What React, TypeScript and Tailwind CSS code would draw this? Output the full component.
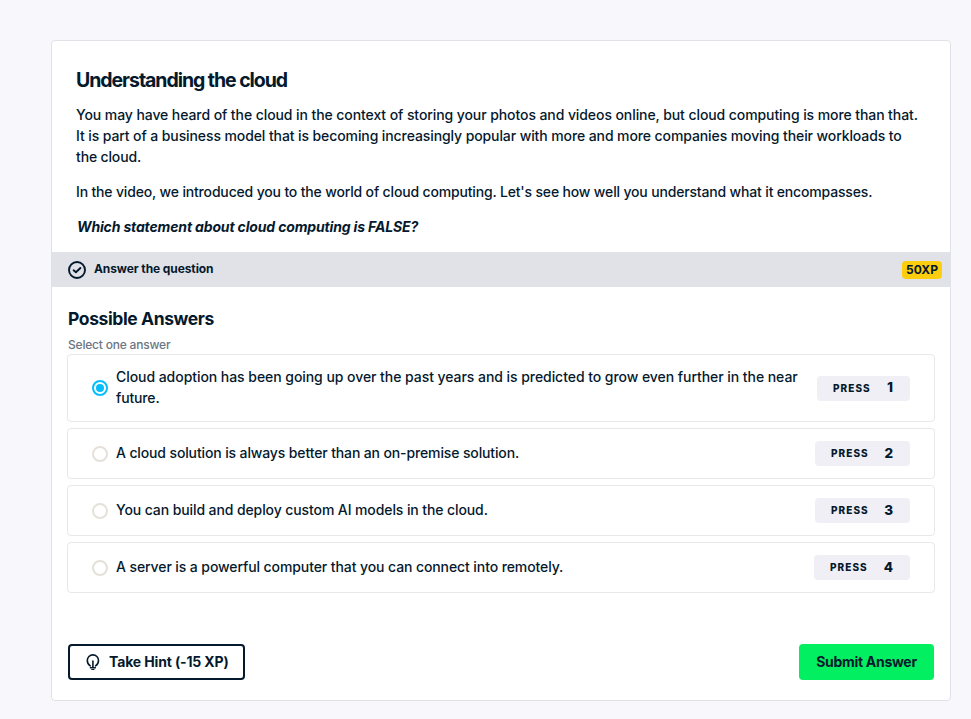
const answers = [
  {
    lines: [
      { text: 'Cloud adoption has been going up over the past years and is predicted to grow even further in the near', track: 'tracking-[-0.055px]' },
      { text: 'future.', track: 'tracking-[-0.15px]' },
    ],
    height: 'h-[68px]',
    badge: 'w-[93px]',
  },
  { lines: [{ text: 'A cloud solution is always better than an on-premise solution.', track: 'tracking-[-0.13px]' }], height: 'h-[51px]', badge: 'w-[95px]' },
  { lines: [{ text: 'You can build and deploy custom AI models in the cloud.', track: 'tracking-[-0.1px]' }], height: 'h-[51px]', badge: 'w-[95px]' },
  { lines: [{ text: 'A server is a powerful computer that you can connect into remotely.', track: 'tracking-[-0.095px]' }], height: 'h-[51px]', badge: 'w-[96px]' },
];

function CheckIcon() {
  return (
    <svg width="18" height="18" viewBox="0 0 18 18" fill="none" stroke="#05192d" strokeWidth="1.9">
      <circle cx="9" cy="9" r="8" />
      <path d="M5.6 9.3l2.3 2 4.5-4.3" strokeLinecap="round" strokeLinejoin="round" />
    </svg>
  );
}

function BulbIcon() {
  return (
    <svg width="14" height="18" viewBox="0 0 14 18" fill="none" stroke="#05192d" strokeWidth="1.6">
      <path d="M4.3 12.9C2.4 11.8 1.3 9.8 1.3 7.5a5.6 5.6 0 0 1 11.2 0c0 2.3-1.1 4.3-3 5.4" strokeLinecap="round" strokeLinejoin="round" />
      <path d="M6.9 8v6" strokeLinecap="round" />
      <path d="M4.4 14.7h5" strokeLinecap="round" strokeWidth="1.4" />
      <path d="M5.8 16.5h2.2" strokeLinecap="round" strokeWidth="1.2" />
    </svg>
  );
}

function Radio({ checked }: { checked: boolean }) {
  return (
    <span className={`flex size-4 shrink-0 items-center justify-center rounded-full border-2 bg-white ${checked ? 'border-[#06bdfc]' : 'border-[#e5e1da]'}`}>
      {checked && <span className="size-2 rounded-full bg-[#06bdfc]" />}
    </span>
  );
}

export default function App() {
  return (
    <div className="h-[719px] w-[971px] overflow-hidden bg-[#f7f7fc] pt-10 pl-[51px] font-['Inter','Liberation_Sans',sans-serif] text-sm text-[#05192d]">
      <main className="flex h-[661px] w-[900px] flex-col rounded border border-[#e1e2e7] bg-white">
        <section className="h-[211px] shrink-0 pt-[26px] pl-6 font-medium leading-[21px] whitespace-nowrap">
          <h1 className="mb-[11px] text-[19.5px] leading-[26px] font-bold tracking-[-1.05px]">Understanding the cloud</h1>
          <p className="mb-3.5">
            <span className="block tracking-[-0.085px]">You may have heard of the cloud in the context of storing your photos and videos online, but cloud computing is more than that.</span>
            <span className="block tracking-[-0.1px]">It is part of a business model that is becoming increasingly popular with more and more companies moving their workloads to</span>
            <span className="block tracking-[-0.15px]">the cloud.</span>
          </p>
          <p className="mb-3.5 tracking-[-0.165px]">In the video, we introduced you to the world of cloud computing. Let's see how well you understand what it encompasses.</p>
          <p className="pl-px font-bold italic tracking-[-0.15px]">Which statement about cloud computing is FALSE?</p>
        </section>
        <header className="flex h-[35px] shrink-0 items-center bg-[#e1e2e7] pr-2 pl-4">
          <CheckIcon />
          <h2 className="ml-2 pb-0.5 text-[12px] font-bold tracking-[-0.1px]">Answer the question</h2>
          <span className="ml-auto flex h-[18px] w-10 items-center justify-center rounded bg-[#fcce0d] text-[12px] font-bold">50XP</span>
        </header>
        <section className="flex grow flex-col px-[15px] pt-5">
          <h2 className="pl-px text-[17.5px] leading-6 font-bold tracking-[-0.4px]">Possible Answers</h2>
          <p className="mt-[5px] h-[18px] pl-px text-[12px] leading-[18px] font-medium tracking-[-0.2px] text-[#6b7684]">Select one answer</p>
          <ul className="flex flex-col gap-1.5">
            {answers.map((answer, i) => (
              <li key={i} className={`flex items-center rounded border border-[#e8e8ec] px-6 ${answer.height}`}>
                <Radio checked={i === 0} />
                <p className="ml-2 pb-[2px] font-medium leading-[21px] whitespace-nowrap">
                  {answer.lines.map((line) => (
                    <span key={line.text} className={`block ${line.track}`}>{line.text}</span>
                  ))}
                </p>
                <span className={`ml-auto flex h-[25px] items-center justify-between rounded bg-[#efeff5] pr-[17px] pl-4 font-extrabold ${answer.badge}`}>
                  <span className="text-[10px] tracking-[1.05px]">PRESS</span>
                  <span className="text-[13.5px]">{i + 1}</span>
                </span>
              </li>
            ))}
          </ul>
          <footer className="mt-[51px] flex justify-between px-px">
            <button className="flex h-9 w-[177px] items-center rounded border-2 border-[#05192d] pl-4 font-bold whitespace-nowrap">
              <BulbIcon />
              <span className="ml-[9px] tracking-[-0.14px]">Take Hint (-15 XP)</span>
            </button>
            <button className="h-9 w-[135px] rounded bg-[#03ef62] font-bold tracking-[-0.3px] whitespace-nowrap">Submit Answer</button>
          </footer>
        </section>
      </main>
    </div>
  );
}
